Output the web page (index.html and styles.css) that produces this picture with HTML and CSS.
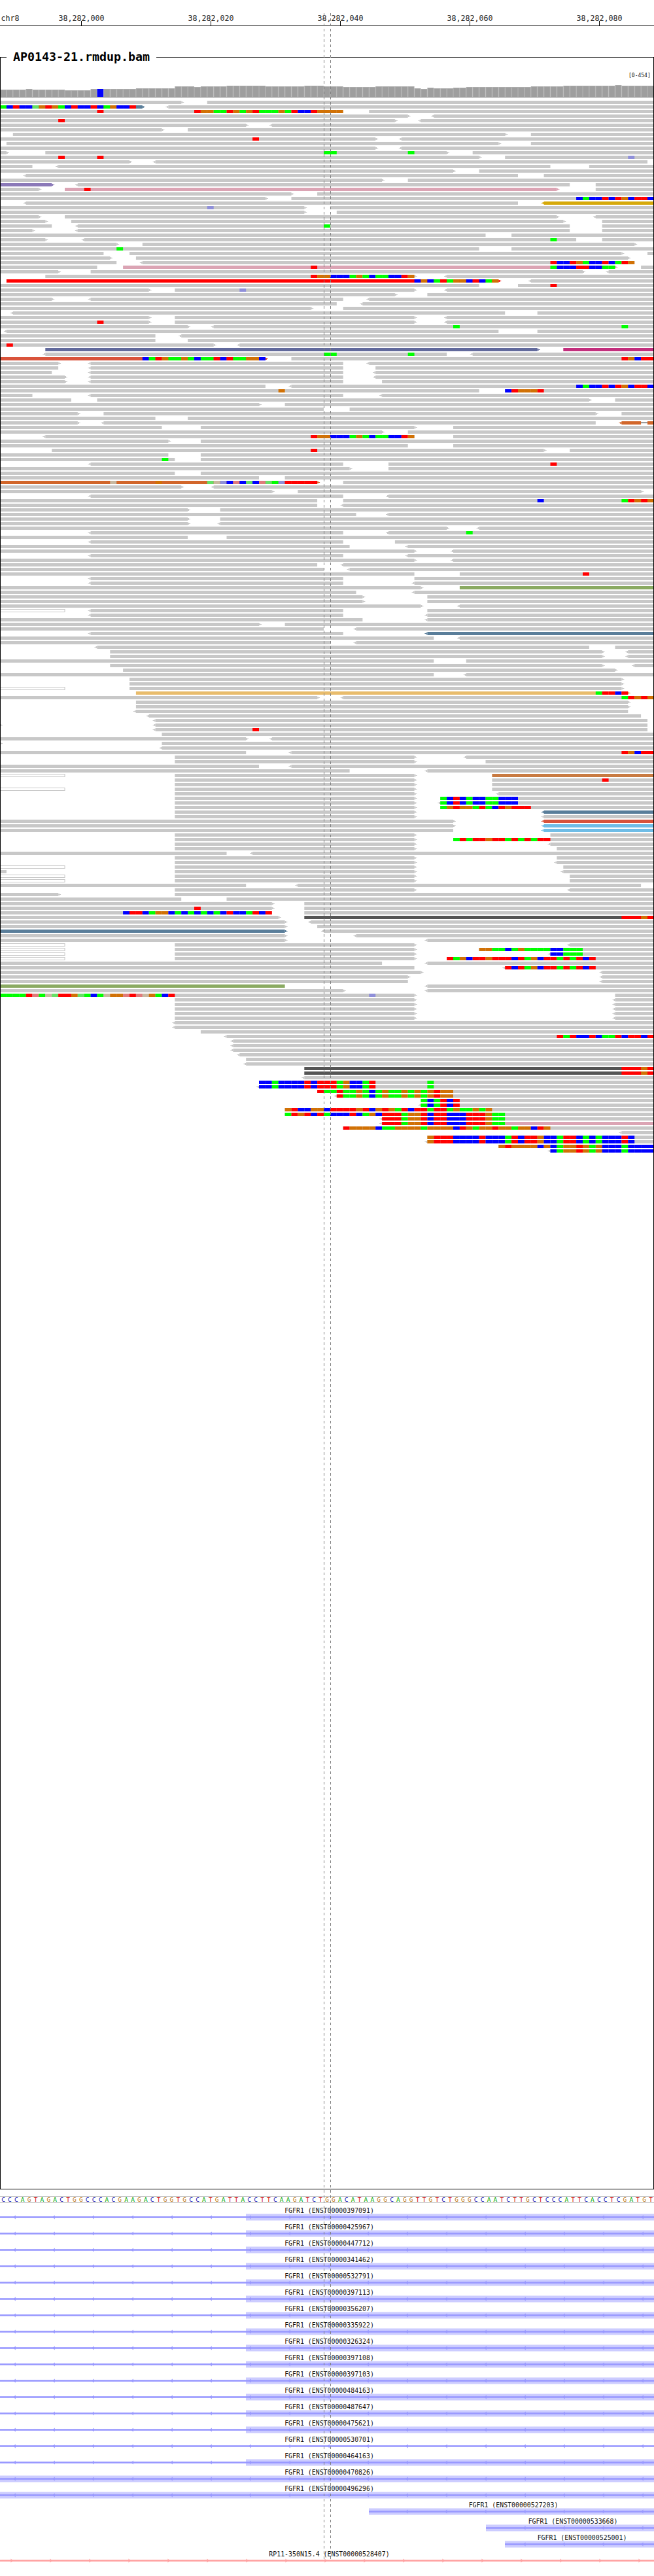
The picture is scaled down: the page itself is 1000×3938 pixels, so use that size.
FILE: index.html
```html
<!DOCTYPE html>
<html lang="en">
<head>
    <meta charset="UTF-8">
    <title>AP0143-21.rmdup.bam</title>
    <link rel="stylesheet" href="styles.css">
</head>
<body>
    <div class="igv">
        <svg id="ruler" class="ruler" width="1000" height="40" viewBox="0 0 1000 40"></svg>
        <section class="bam-track">
            <h1 class="bam-title">AP0143-21.rmdup.bam</h1>
            <svg id="alignments" class="alignments" width="998" height="3258" viewBox="1 88 998 3258"></svg>
        </section>
        <svg id="sequence" class="sequence" width="1000" height="12" viewBox="0 3357 1000 12"></svg>
        <svg id="genes" class="genes" width="1000" height="569" viewBox="0 3369 1000 569"></svg>
        <svg class="guides" width="1000" height="3938" viewBox="0 0 1000 3938">
            <line x1="495.5" y1="20" x2="495.5" y2="3915"></line>
            <line x1="505.5" y1="20" x2="505.5" y2="3915"></line>
        </svg>
    </div>
    <script src="tracks.js"></script>
</body>
</html>
```

FILE: styles.css
```css
html, body {
    margin: 0;
    padding: 0;
    background: #fff;
}
text {
    font-family: "DejaVu Sans Mono", monospace;
}
svg {
    display: block;
}
.igv {
    position: relative;
    width: 1000px;
    height: 3938px;
    overflow: hidden;
}
.ruler {
    margin-bottom: 47px;
}
.ruler text {
    font-size: 11.6px;
    fill: #222;
}
.ruler line {
    stroke: #000;
    stroke-width: 1;
}
.bam-track {
    position: relative;
    height: 3258px;
    border: 1px solid #000;
    margin-bottom: 10px;
}
.bam-title {
    position: absolute;
    left: 9px;
    top: -12px;
    margin: 0;
    padding: 0 10px;
    background: #fff;
    font: bold 18.3px/22px "DejaVu Sans Mono", monospace;
    color: #000;
}
.scale-label {
    font-size: 8px;
    fill: #111;
}
.cov-edge { fill: #ababab; }
.cov-bar { fill: #9e9e9e; }
.cov-line { fill: #7a7a7a; }
.cov-blue { fill: #0000ff; }

.read { fill: #c8c8c8; }
.read-hollow { fill: #fff; stroke: #c8c8c8; stroke-width: 1; }
.read-purple { fill: #8b79b8; }
.read-pink { fill: #dba4b4; }
.read-gold { fill: #d6a90a; }
.read-navy { fill: #626a9c; }
.read-magenta { fill: #c22e7c; }
.read-red { fill: #ff0000; }
.read-brick { fill: #d9533b; }
.read-rust { fill: #d2662a; }
.read-olive { fill: #8aaa62; }
.read-steel { fill: #5a7e9a; }
.read-tan { fill: #e8bc6c; }
.read-copper { fill: #c87a42; }
.read-sky { fill: #70bde6; }
.read-dark { fill: #555; }
.read-link { fill: #000; }

.base-g { fill: #00ff00; }
.base-b { fill: #0000ff; }
.base-r { fill: #ff0000; }
.base-o { fill: #d17105; }
.base-m { fill: #8f8fd9; }
.base-L { fill: #66e066; }
.base-s { fill: #e07b7b; }
.base-t { fill: #c8b8a0; }

.seq-line { fill: #aaa; }
.sequence text {
    font-size: 9.5px;
    text-anchor: middle;
}
.nt-A { fill: #00a800; }
.nt-C { fill: #1414b4; }
.nt-G { fill: #c07a20; }
.nt-T { fill: #d01010; }

.gene-label {
    font-size: 9.9px;
    fill: #111;
    text-anchor: middle;
}
.exon { fill: #ccccff; }
.intron { fill: #9999ff; }
.intron-rev { fill: #ffa0a0; }

.guides {
    position: absolute;
    left: 0;
    top: 0;
    pointer-events: none;
}
.guides line {
    stroke: #808080;
    stroke-width: 1;
    stroke-dasharray: 4 4;
}
```

FILE: tracks.js
```js
const NS = "http://www.w3.org/2000/svg";
const BP = 9.9;

// reads: start-end in bases, < or > for strand arrow, :colour for a tinted read
// after the bar: base:letters, one letter per mismatched base
const ROWS = [
    "0-28> 32-101",
    "0-22>:steel <26-101 | 0:gbrbbLorogbrbbrbgobbr",
    "0-53 57-101 | 15:r 30:rooggrogorgggogrbbroooo",
    "0-63> <67-101",
    "0-61> <65-101 | 9:r",
    "0-38> <42-101",
    "0-25> 29-101",
    "2-78> 82-101",
    "0-58> <62-101 | 39:r",
    "1-77> 82-101",
    "0-58> <62-101",
    "0-1> 7-69> 73-101 | 50:gg 63:g",
    "0-74> 78-101 | 9:r 15:r 97:m",
    "0-20> <24-100",
    "0-5 <9-85 91-101",
    "0-70> 74-101",
    "<4-80 84-101",
    "0-59> 63-101",
    "0-8>:purple <12-88 92-101",
    "0-6> 10-86>:pink 92-101 | 13:r",
    "0-45> 49-101",
    "0-41> 45-101 | 89:bgbbrbrobrrb",
    "<4-80 <84-101:gold",
    "0-47> 51-101 | 32:m",
    "0-47> 52-101",
    "0-6> 10-86> <92-101",
    "0-7> 11-87> 93-101",
    "0-8 <12-88 93-101 | 50:g",
    "0-5> <12-88 93-101",
    "0-75 79-101",
    "0-7> <13-89 93-101 | 85:g",
    "0-18> 22-98>",
    "0-74 79-101 | 18:g",
    "0-16 20-96> 100-101",
    "0-17> 21-97>",
    "0-18 <22-98 | 85:rbbrogbbrbgro",
    "0-15 19-95>:pink 99-101 | 48:r 85:gbbbrrbbgg",
    "0-9> 14-90> <94-101",
    "7-64> <69-101 | 48:roobbbgogbggbbro",
    "1-77>:red <82-101 | 64:bobgrgoobrbgo",
    "0-74 80-101 | 85:r",
    "0-23> 27-64> <69-101 | 37:m",
    "0-61> 66-101",
    "0-8> <14-53 <57-101",
    "0-52 <56-101",
    "0-48> 53-101",
    "<2-78 83-101",
    "0-23> 27-64> <69-101",
    "0-23> 27-64> <69-101 | 15:r",
    "0-29> <33-101 | 70:g 96:g",
    "<1-77 83-101",
    "0-24 <28-101",
    "0-24 29-101",
    "0-33> <37-101 | 1:r",
    "7-83>:navy 87-101:magenta",
    "<7-69 <73-101 | 50:gg 63:g",
    "0-41>:brick 45-101 | 22:bgroggogbggrbrggoob 96:robrr",
    "0-9> <14-53 <57-101",
    "0-9 <14-53 58-101",
    "0-8 <14-53 <58-101",
    "0-10> <14-53 <58-101",
    "0-10> <14-53 59-101",
    "0-41 <45-101 | 89:bgbbrbrobrrb",
    "0-74 78-101 | 43:o 78:brooor",
    "0-5 <14-53 <59-101",
    "0-11 15-91> 95-101",
    "0-40> 44-101",
    "0-50 54-101",
    "0-12> 16-92> 96-101",
    "0-24 29-101",
    "0-12> <16-92 <96-99:rust 99-100:link 100-101:rust",
    "0-25 31-64> 70-101",
    "0-59> 63-101",
    "<7-64 70-101 | 48:roobbbgogbggbbro",
    "0-26> 31-101",
    "0-63 70-101",
    "8-84> 88-101 | 48:r",
    "0-26 31-101",
    "0-27 31-101 | 25:g",
    "<14-53 60-101 | 85:r",
    "0-54> 60-101",
    "0-27 31-101",
    "0-40 44-101",
    "0-49>:rust 53-101 | 17:t 24:o 32:LtmbsbLbsLgmrrrrr",
    "0-28> <33-101",
    "0-42> 46-99>",
    "<14-53 <60-101",
    "0-49 53-101 | 83:b 96:groro",
    "0-49 <53-101",
    "0-29> 34-101",
    "0-55 <60-101",
    "0-29> 34-101",
    "0-29> <34-101",
    "0-69> <74-101",
    "<14-53 <60-101 | 72:g",
    "0-29 35-101",
    "<14-53 61-101",
    "0-54 <63-101",
    "0-64> <70-101",
    "<14-53 <63-101",
    "0-64> <70-101",
    "0-49 <53-101",
    "0-50 <54-101",
    "0-64 71-101 | 90:r",
    "<14-53 64-101",
    "<14-53 <64-101",
    "0-65> 71-101:olive",
    "0-55 <64-101",
    "0-56> 66-101",
    "0-56> 66-101",
    "0-65> <71-101",
    "0-10:hollow <14-53 66-101",
    "<14-53 <66-101",
    "0-56 <66-101",
    "0-40> 44-101",
    "0-50 <55-101",
    "<14-53 <66-101:steel",
    "0-67 <71-101",
    "0-51 <55-101",
    "<15-91 95-101",
    "17-93> <97-101",
    "17-93> <97-101",
    "0-67 72-101",
    "17-93> <98-101",
    "19-95>",
    "0-67 <72-101",
    "20-96>",
    "20-96>",
    "0-10:hollow 20-96>",
    "21-97>:tan | 92:grrbr",
    "0-49> <53-101 | 96:groro",
    "21-97>",
    "21-97>",
    "<21-97",
    "<23-99",
    "<24-100",
    "0-0> <24-100",
    "<24-100 | 39:r",
    "25-101",
    "0-38> <42-101",
    "0-0> 25-101",
    "<25-101",
    "0-38 <45-101 | 96:robrr",
    "27-64> <72-101",
    "27-64> 75-101",
    "0-40 <45-101",
    "0-54 <66-101",
    "0-10:hollow 27-64> 76-101:copper",
    "27-64> 76-101 | 93:r",
    "27-64> 76-101",
    "0-10:hollow 27-64> 76-101",
    "27-64> <77-101",
    "27-64> 68-101 | 68:gbrbgbbggbbb",
    "27-64> <68-101 | 68:gbrbgbbggbbb",
    "27-64> 68-101 | 68:goroogrgbrorrr",
    "27-64> <84-101:steel",
    "27-64> <84-101",
    "0-70> <84-101:brick",
    "0-70> <84-101:sky",
    "0-70 <84-101:sky",
    "27-64> 85-101",
    "27-64> 70-101 | 70:grgrrorrgrgrgrr",
    "27-64> <85-101",
    "27-64> 86-101",
    "0-35 <39-101",
    "27-64> 86-101",
    "27-64> <86-101",
    "0-10:hollow 27-64> 87-101",
    "0-1 27-64> <87-101",
    "0-10:hollow 27-64> 88-101",
    "0-10:hollow 27-64> 88-101",
    "0-38 <46-99",
    "27-64> <88-101",
    "0-9> 27-101",
    "0-28 35-101",
    "0-42> 47-101",
    "0-42> 47-101 | 30:r",
    "0-42 47-101 | 19:brrbgoobgbgbgbgbrbbgrbr",
    "0-43> 47-101:dark | 96:rrror",
    "0-44> <48-101",
    "0-44> 49-101",
    "0-44>:steel <50-101",
    "0-44> <55-101",
    "0-44> <66-101",
    "0-10:hollow 27-64> <88-101",
    "0-10:hollow 27-64> 74-101 | 74:ooggbgoggggbbggg",
    "0-10:hollow 27-64> <85-101 | 85:bbggg",
    "0-10:hollow 27-64> 69-101 | 69:rgobrrorrrbrgobrrgrgrbr",
    "0-59 <66-101",
    "0-64 <78-101 | 78:rbrgobrrgrgrbr",
    "0-65> <93-101",
    "0-63> <93-101",
    "0-63 <93-101",
    "0-44:olive <66-101",
    "0-53> <66-101",
    "0-64> 95-101 | 0:ggggrsgtLrroLgbgtoosrstogbr 57:m",
    "27-64> <95-101",
    "27-64> <95-101",
    "27-64> <95-101",
    "27-64> <95-101",
    "27-64> <95-101",
    "<27-101",
    "<27-101",
    "31-101",
    "<35-101 | 86:rgrbbrbggrbrrbr",
    "<36-101",
    "<36-101",
    "<36-101",
    "<37-101",
    "38-101",
    "<38-101",
    "47-101:dark | 96:rrror",
    "47-101:dark | 96:rrror",
    "<47-101",
    "40-101 | 40:bbgbbbbrbrrrgobbgr 66:g",
    "<40-101 | 40:bbgbbbbrbrrrgobbgr 66:g",
    "49-101 | 49:rggrggogbgoggogogoroo",
    "<52-101 | 52:rggogbgoggogogoroo",
    "65-101 | 65:gbgrbr",
    "<65-101 | 65:gbgrbr",
    "44-101 | 44:orbboobrrrrorborogrbrrgrrgoggogo",
    "44-101 | 44:grorbrgbbbrbgobrrrgoorbrrbbbrrrogg",
    "<59-101 | 59:rrrgoorbrrbbbrrrogg",
    "<59-78 78-101:pink | 59:rrrgoorbrrbbbrrrogg",
    "53-101 | 53:roooobggoooogoooobrogoorooBoobro".replace("B", "g"),
    "<96-101",
    "66-101 | 66:orrrbbbbrbbbgrbrrobbgrrbgbgbbbrb",
    "<66-101 | 66:orrrbbbbrbbbgrbrrobbgrrbgbgbbbrb",
    "77-101 | 77:oroooobobgoorogobbbgbbbb",
    "<85-101 | 85:bgoorogobbbgbbbb"
];

// top of the coverage bar, per base
const COVERAGE = [
    137, 137, 137, 137, 136, 137, 137, 137, 137, 137,
    138, 138, 138, 138, 136, 136, 136, 136, 136, 136,
    136, 135, 135, 135, 135, 135, 135, 132, 132, 132,
    133, 132, 132, 132, 132, 131, 131, 131, 131, 131,
    131, 132, 132, 132, 132, 132, 132, 131, 131, 131,
    132, 132, 132, 133, 133, 133, 133, 133, 132, 132,
    132, 132, 132, 132, 135, 136, 134, 135, 135, 135,
    134, 134, 133, 133, 133, 133, 133, 133, 133, 133,
    133, 133, 132, 132, 132, 132, 132, 131, 131, 131,
    131, 131, 131, 131, 131, 130, 131, 131, 131, 131, 131
];

const SEQUENCE = "CCCAGTAGACTGGCCCACGAAGACTGGTGCCATGATTACCTTCAAGATCTG" +
    "GACATAAGGCAGGTTGTCTGGGCCAATCTTGCTCCCATTCACCTCGATGT";

const GENES = [
    ["00000397091", 376], ["00000425967", 376], ["00000447712", 376],
    ["00000341462", 376], ["00000532791", 376], ["00000397113", 376],
    ["00000356207", 376], ["00000335922", 376], ["00000326324", 376],
    ["00000397108", 376], ["00000397103", 376], ["00000484163", 376],
    ["00000487647", 376], ["00000475621", 376], ["00000530701", null],
    ["00000464163", 376], ["00000470826", 0], ["00000496296", 0]
];
const LATE_GENES = [
    ["00000527203", 564, 785, 622],
    ["00000533668", 743, 876, 802],
    ["00000525001", 772, 890, 802]
];

function el(parent, name, attrs, text) {
    const node = document.createElementNS(NS, name);
    for (const key in attrs) {
        node.setAttribute(key, attrs[key]);
    }
    if (text) {
        node.textContent = text;
    }
    parent.appendChild(node);
    return node;
}

function rect(parent, cls, x, y, w, h) {
    return el(parent, "rect", { class: cls, x: x, y: y, width: w, height: h });
}

function drawRuler() {
    const svg = document.getElementById("ruler");
    el(svg, "text", { x: 1.5, y: 32 }, "chr8");
    ["000", "020", "040", "060", "080"].forEach((end, i) => {
        const x = 124.5 + i * 198;
        el(svg, "text", { x: x, y: 32, "text-anchor": "middle" }, "38,282," + end);
        el(svg, "line", { x1: x, y1: 32, x2: x, y2: 39 });
    });
    el(svg, "line", { x1: 0, y1: 39.5, x2: 1000, y2: 39.5 });
}

function drawCoverage(svg) {
    COVERAGE.forEach((top, k) => {
        const x = k * BP;
        if (k === 15) {
            rect(svg, "cov-blue", x, top, BP, 148 - top);
            return;
        }
        rect(svg, "cov-edge", x, top, BP, 148 - top);
        rect(svg, "cov-bar", x + 1, top + 1, 8, 147 - top);
    });
    rect(svg, "cov-line", 0, 148, 1000, 1);
    el(svg, "text", { class: "scale-label", x: 961, y: 118 }, "[0-454]");
}

function drawRead(svg, token, y) {
    const m = token.match(/^(<)?(\d+)-(\d+)(>)?(?::(\w+))?$/);
    const x1 = m[2] * BP;
    const x2 = m[3] * BP;
    const cls = m[5] ? "read-" + m[5] : "read";
    if (m[5] === "hollow") {
        rect(svg, cls, x1, y + 0.5, x2 - x1, 4);
        return;
    }
    if (m[5] === "link") {
        rect(svg, cls, x1, y + 2, x2 - x1, 1);
        return;
    }
    rect(svg, cls, x1, y, x2 - x1, 5);
    if (m[1]) {
        rect(svg, cls, x1 - 2, y + 1, 2, 3);
        rect(svg, cls, x1 - 4, y + 2, 2, 1);
    }
    if (m[4]) {
        rect(svg, cls, x2, y + 1, 2, 3);
        rect(svg, cls, x2 + 2, y + 2, 2, 1);
    }
}

function drawAlignments() {
    const svg = document.getElementById("alignments");
    drawCoverage(svg);
    ROWS.forEach((row, n) => {
        const y = 154 + n * 7;
        const parts = row.split(" | ");
        parts[0].split(" ").forEach(token => drawRead(svg, token, y));
        if (parts[1]) {
            parts[1].split(" ").forEach(run => {
                const [start, letters] = run.split(":");
                letters.split("").forEach((letter, i) => {
                    rect(svg, "base-" + letter, (Number(start) + i) * BP, y, BP, 5);
                });
            });
        }
    });
}

function drawSequence() {
    const svg = document.getElementById("sequence");
    rect(svg, "seq-line", 0, 3357, 1000, 1);
    rect(svg, "seq-line", 0, 3367, 1000, 1);
    SEQUENCE.split("").forEach((nt, k) => {
        el(svg, "text", { class: "nt-" + nt, x: k * BP + 5, y: 3366 }, nt);
    });
}

function drawArrows(svg, cls, y, from, dir) {
    for (let x = from; x < 1000; x += 60) {
        const tip = x - 2 * dir;
        const back = x + 1.5 * dir;
        el(svg, "polygon", {
            class: cls,
            points: `${tip},${y} ${back},${y - 3} ${back},${y + 3}`
        });
    }
}

function drawGene(svg, i, label, center, exon, lineFrom, arrowFrom) {
    const y = 3389.5 + i * 25;
    el(svg, "text", { class: "gene-label", x: center, y: y - 7 }, label);
    if (exon !== null) {
        rect(svg, "exon", exon, y - 5, 1000 - exon, 10);
    }
    rect(svg, "intron", lineFrom, y - 1.3, 1000 - lineFrom, 2.6);
    drawArrows(svg, "intron", y, arrowFrom, 1);
}

function drawGenes() {
    const svg = document.getElementById("genes");
    GENES.forEach((gene, i) => {
        drawGene(svg, i, `FGFR1 (ENST${gene[0]})`, 503.5, gene[1], 0, 22.3);
    });
    LATE_GENES.forEach((gene, i) => {
        drawGene(svg, 18 + i, `FGFR1 (ENST${gene[0]})`, gene[2], gene[1], gene[1], gene[3]);
    });
    const y = 3914.5;
    el(svg, "text", { class: "gene-label", x: 503.5, y: y - 7 }, "RP11-350N15.4 (ENST00000528407)");
    rect(svg, "intron-rev", 0, y - 1.3, 1000, 2.6);
    drawArrows(svg, "intron-rev", y, 18, -1);
}

drawRuler();
drawAlignments();
drawSequence();
drawGenes();
```
